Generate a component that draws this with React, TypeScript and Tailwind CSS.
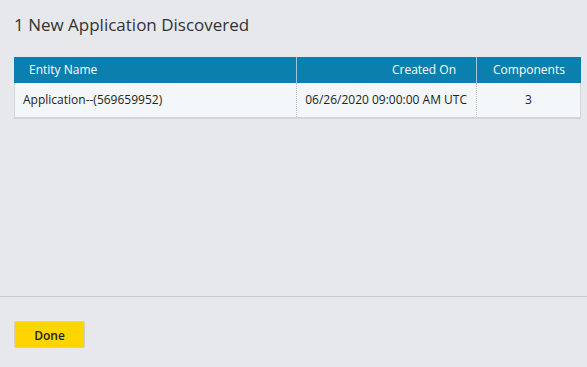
import React from "react";

const rows = [
  { name: "Application--(569659952)", created: "06/26/2020 09:00:00 AM UTC", components: 3 },
];

function App() {
  return (
    <div className="w-[587px] h-[367px] bg-[#e6e8ec] flex flex-col text-[#222] font-['Open_Sans',sans-serif]">
      <div className="flex-1 px-[14px] pt-[13px]">
        <h1 className="text-[17px] leading-[24px] text-[#333]">1 New Application Discovered</h1>

        {/* table */}
        <div className="mt-[20px] w-[567px] border-b-2 border-[#d3d5d9]">
          <div className="flex h-[26px] bg-[#0b7fae] text-white text-[12px] items-center">
            <div className="w-[283px] pl-[15px] self-stretch flex items-center border-r border-[#9cc6dc]">Entity Name</div>
            <div className="w-[180px] pr-[20px] self-stretch flex items-center justify-end border-r border-[#9cc6dc]">Created On</div>
            <div className="flex-1 self-stretch flex items-center justify-center">Components</div>
          </div>
          {rows.map((r) => (
            <div key={r.name} className="flex h-[34px] bg-[#f4f7fa] text-[12px] border-l border-r border-[#d3d5d9]">
              <div className="w-[282px] pl-[8px] flex items-center border-r border-dotted border-[#bfc3c8]">{r.name}</div>
              <div className="w-[180px] pr-[9px] flex items-center justify-end border-r border-dotted border-[#bfc3c8]">{r.created}</div>
              <div className="flex-1 flex items-center justify-center">{r.components}</div>
            </div>
          ))}
        </div>
      </div>

      {/* footer */}
      <div className="h-[71px] border-t border-[#c8cacd] px-[14px] pt-[24px]">
        <button className="w-[71px] h-[27px] bg-[#ffd500] border border-[#d4d0c0] rounded-[2px] text-[12px] font-semibold text-[#222] leading-[25px] pt-[1px]">
          Done
        </button>
      </div>
    </div>
  );
}

export default App;
